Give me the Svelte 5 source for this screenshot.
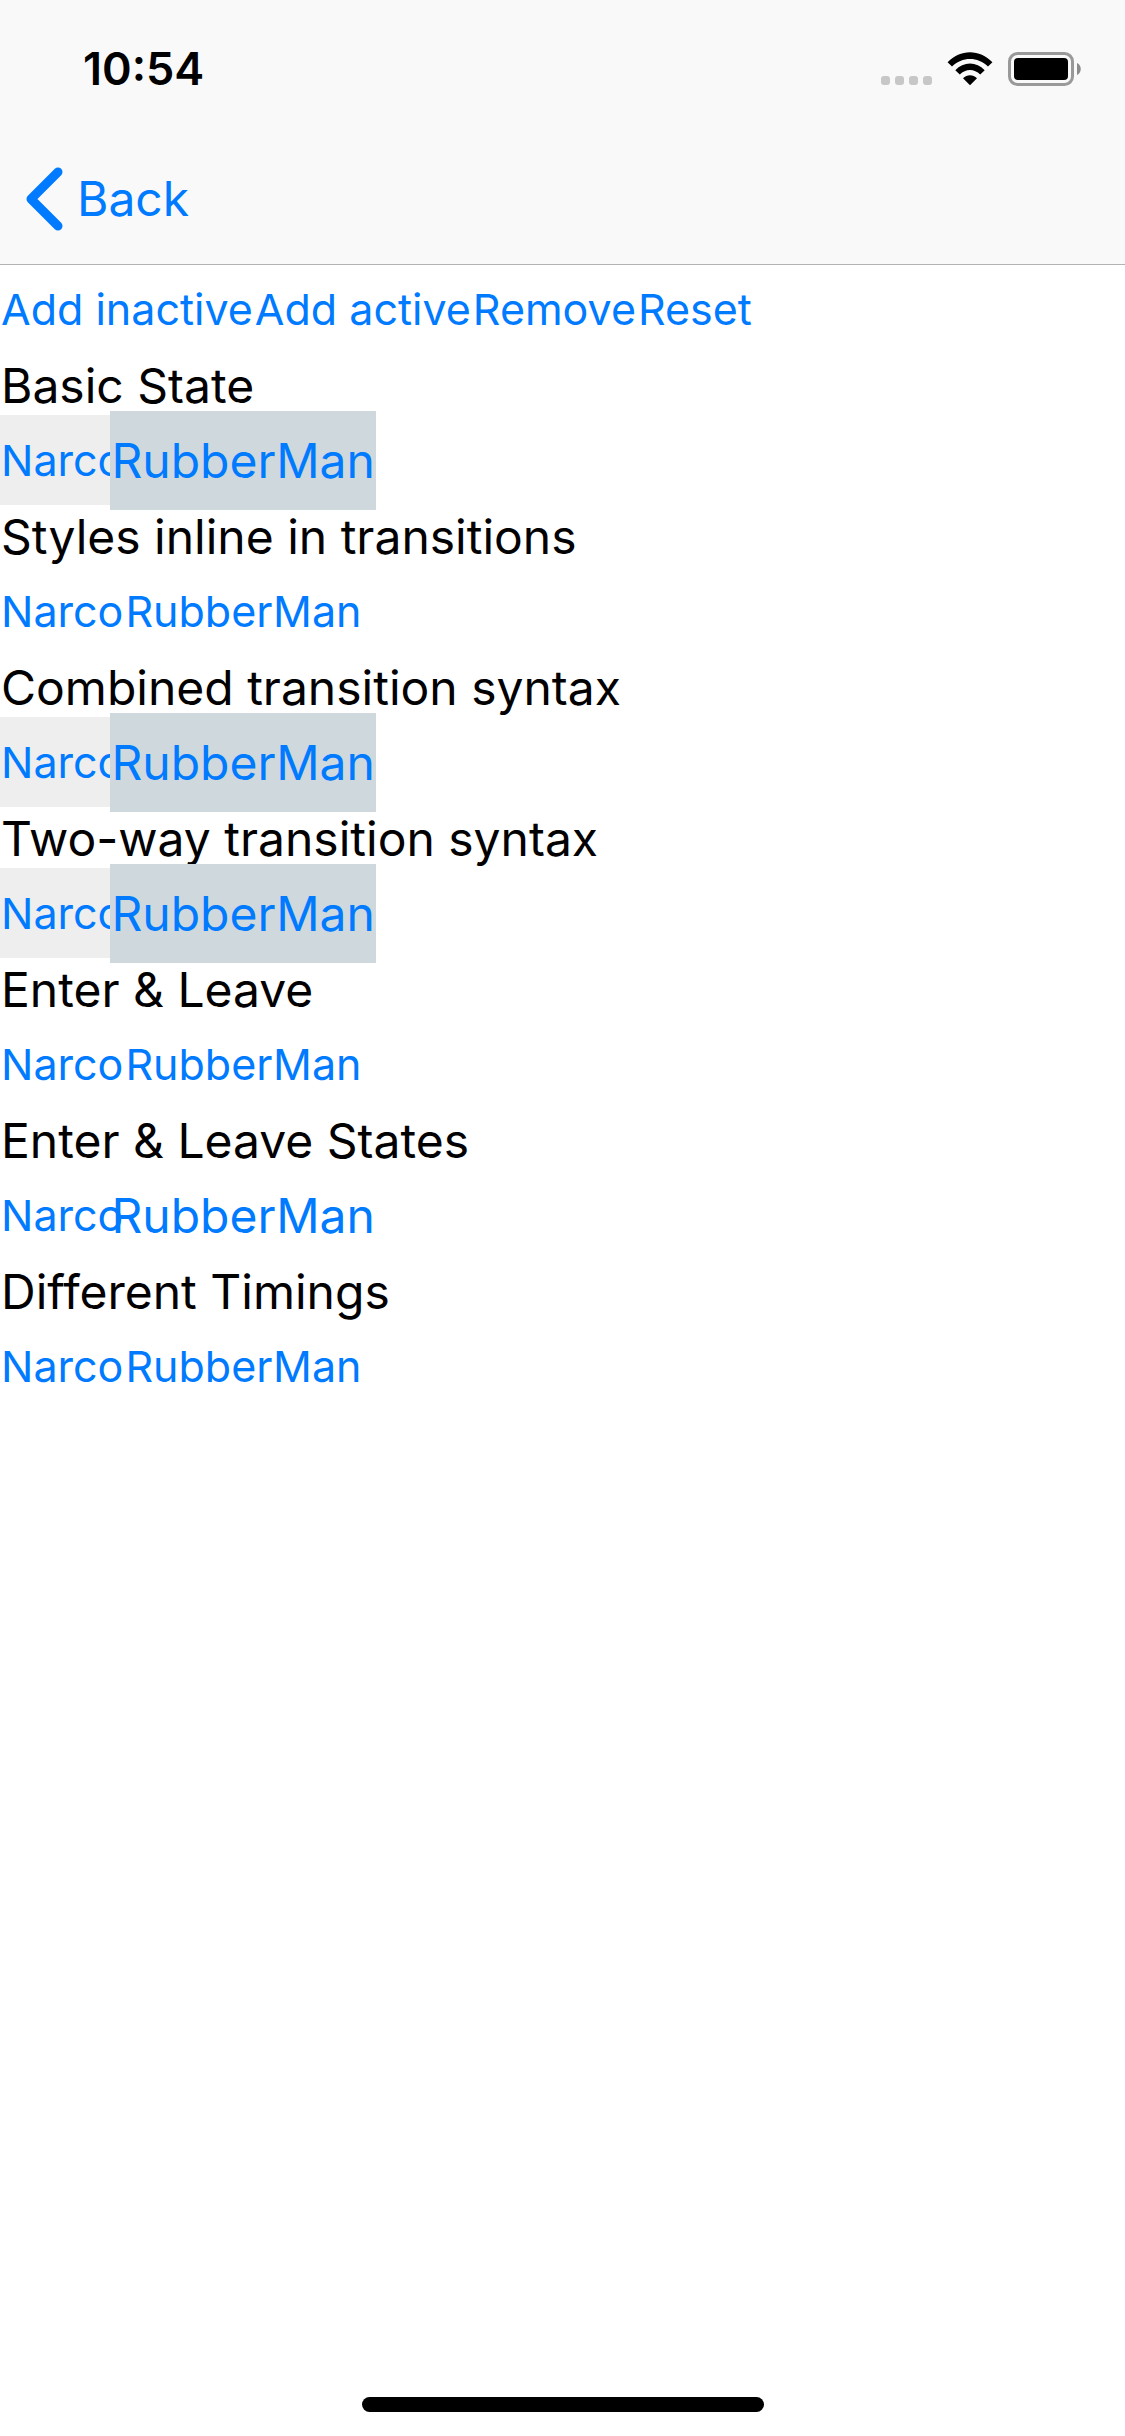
<script>
  const actions = ['Add inactive', 'Add active', 'Remove', 'Reset'];

  const sections = [
    { title: 'Basic State', filled: true, enlarged: true },
    { title: 'Styles inline in transitions', filled: false, enlarged: false },
    { title: 'Combined transition syntax', filled: true, enlarged: true },
    { title: 'Two-way transition syntax', filled: true, enlarged: true },
    { title: 'Enter & Leave', filled: false, enlarged: false },
    { title: 'Enter & Leave States', filled: false, enlarged: true },
    { title: 'Different Timings', filled: false, enlarged: false }
  ];
</script>

<div class="screen">
  <header>
    <div class="status">
      <time>10:54</time>
      <div class="indicators">
        <svg class="cellular" viewBox="0 0 51 9" aria-label="No signal">
          <rect x="0" width="9" height="9" rx="3" />
          <rect x="14" width="9" height="9" rx="3" />
          <rect x="28" width="9" height="9" rx="3" />
          <rect x="42" width="9" height="9" rx="3" />
        </svg>
        <svg class="wifi" viewBox="0 0 46 34" aria-label="Wi-Fi">
          <path d="M0.6 10.2 C13 -3.2 33 -3.2 45.4 10.2 L41 14.6 C31 4.4 15 4.4 5 14.6 Z" />
          <path d="M8.3 18.2 C16.5 9.2 29.5 9.2 37.7 18.2 L33.2 22.6 C27.4 16.4 18.6 16.4 12.8 22.6 Z" />
          <path d="M16 26.2 C20 22.2 26 22.2 30 26.2 L23 33.2 Z" />
        </svg>
        <svg class="battery" viewBox="0 0 73 34" aria-label="Battery full">
          <rect x="1.5" y="1.5" width="63" height="31" rx="8" fill="none" stroke="#999" stroke-width="3" />
          <rect x="6" y="6" width="54" height="22" rx="4" />
          <path d="M69 11 C74 13 74 21 69 23 Z" fill="#8c8c8c" />
        </svg>
      </div>
    </div>
    <nav>
      <button class="back">
        <svg class="chevron" viewBox="0 0 38 64" aria-hidden="true">
          <path d="M33 5 L6 32 L33 59" />
        </svg>
        <span>Back</span>
      </button>
    </nav>
  </header>

  <main>
    <div class="row">
      {#each actions as action}
        <button>{action}</button>
      {/each}
    </div>
    {#each sections as section}
      <section>
        <h2>{section.title}</h2>
        <div class="row" class:filled={section.filled}>
          <button class="hero">Narco</button>
          <button class="hero" class:enlarged={section.enlarged}>RubberMan</button>
        </div>
      </section>
    {/each}
  </main>

  <footer><div class="home"></div></footer>
</div>

<style>
  :global(body) {
    background: #fff;
  }

  .screen {
    display: flex;
    flex-direction: column;
    min-height: 100vh;
    font-family: Inter, 'Liberation Sans', sans-serif;
    color: #000;
  }

  header {
    background: #f9f9f9;
    box-shadow: 0 1px #b2b2b2;
  }

  .status {
    display: flex;
    justify-content: space-between;
    height: 132px;
    padding: 0 44px 0 83px;
    box-sizing: border-box;
  }

  time {
    font-size: 45px;
    font-weight: 600;
    line-height: 138px;
  }

  .indicators {
    display: flex;
    align-items: flex-end;
    height: 86px;
  }

  .cellular {
    width: 51px;
    height: 9px;
    margin: 0 15px 1px 0;
    fill: #c7c7c7;
  }

  .wifi {
    width: 46px;
    height: 34px;
    margin-right: 15px;
  }

  .battery {
    width: 73px;
    height: 34px;
  }

  nav {
    display: flex;
    height: 134px;
    margin-bottom: -2px;
    padding-left: 24px;
  }

  button {
    flex: none;
    margin: 0;
    padding: 0 1px;
    border: 0;
    background: none;
    font-family: inherit;
    font-size: 43px;
    line-height: 90px;
    color: #007aff;
    white-space: nowrap;
    cursor: pointer;
  }

  .back {
    display: flex;
    align-items: center;
    gap: 14px;
    font-size: 48px;
  }

  .chevron {
    width: 38px;
    height: 64px;
    fill: none;
    stroke: #007aff;
    stroke-width: 9px;
    stroke-linecap: round;
    stroke-linejoin: round;
  }

  main {
    flex: 1;
  }

  .row {
    display: flex;
    height: 90px;
  }

  h2 {
    height: 61px;
    margin: 0;
    padding-left: 1px;
    font-size: 48px;
    font-weight: 400;
    line-height: 63px;
  }

  .filled .hero {
    background: #eee;
  }

  .hero.enlarged {
    position: relative;
    margin: -4px 0 -5px -14px;
    font-size: 48px;
    line-height: 99px;
  }

  .filled .hero.enlarged {
    background: #cfd8dc;
  }

  footer {
    display: flex;
    justify-content: center;
    padding-bottom: 24px;
  }

  .home {
    width: 402px;
    height: 15px;
    border-radius: 8px;
    background: #000;
  }
</style>
